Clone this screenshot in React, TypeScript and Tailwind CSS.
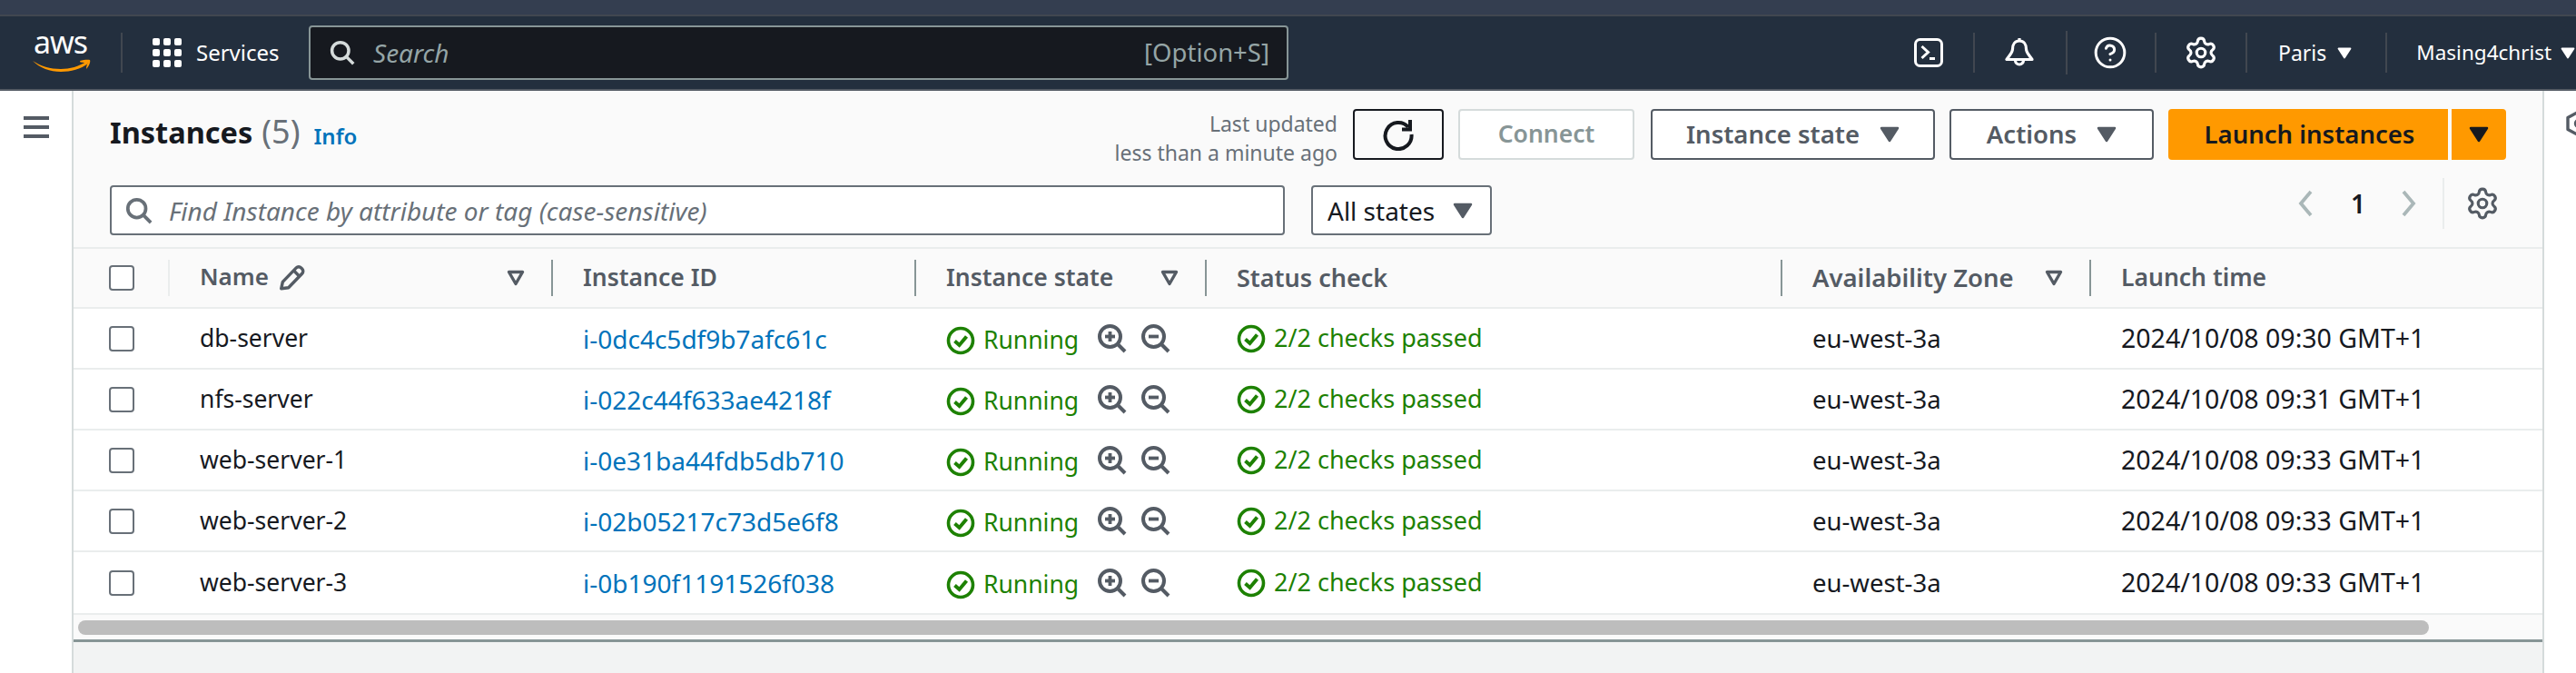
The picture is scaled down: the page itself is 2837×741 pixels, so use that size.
import { CircleHelp, Settings } from "lucide-react";

const instances = [
  { name: "db-server", id: "i-0dc4c5df9b7afc61c", time: "2024/10/08 09:30 GMT+1" },
  { name: "nfs-server", id: "i-022c44f633ae4218f", time: "2024/10/08 09:31 GMT+1" },
  { name: "web-server-1", id: "i-0e31ba44fdb5db710", time: "2024/10/08 09:33 GMT+1" },
  { name: "web-server-2", id: "i-02b05217c73d5e6f8", time: "2024/10/08 09:33 GMT+1" },
  { name: "web-server-3", id: "i-0b190f1191526f038", time: "2024/10/08 09:33 GMT+1" },
];

function Caret({ className }: { className: string }) {
  return (
    <svg viewBox="0 0 22 18" className={`shrink-0 ${className}`}>
      <path d="M2 2h18L11 16z" fill="currentColor" stroke="currentColor" strokeWidth="2.500" strokeLinejoin="round" />
    </svg>
  );
}

function FilterCaret() {
  return (
    <svg viewBox="0 0 20 18" className="w-[20px] h-[18px] text-[#545b64]">
      <path d="M2.500 2.500h15L10 15.500z" fill="none" stroke="currentColor" strokeWidth="3.400" strokeLinejoin="round" />
    </svg>
  );
}

function SearchIcon({ className }: { className: string }) {
  return (
    <svg viewBox="0 0 32 32" className={`shrink-0 ${className}`} fill="none" stroke="currentColor" strokeWidth="4">
      <circle cx="13.500" cy="13.500" r="10.500" />
      <path d="M21 21l9 9" />
    </svg>
  );
}

function CheckCircle() {
  return (
    <svg viewBox="0 0 32 32" className="w-[32px] h-[32px] shrink-0 text-[#1d8102]" fill="none" stroke="currentColor">
      <circle cx="16" cy="16" r="13.500" strokeWidth="3.600" />
      <path d="M9.500 16.500l5 4.500 8-9.500" strokeWidth="4" />
    </svg>
  );
}

function ZoomGlass({ plus }: { plus?: boolean }) {
  return (
    <svg viewBox="0 0 32 32" className="w-[32px] h-[32px] shrink-0 text-[#545b64]" fill="none" stroke="currentColor" strokeWidth="4">
      <circle cx="13.500" cy="13.500" r="11.500" />
      <path d="M21.500 21.500l8.500 8.500" />
      <path d="M8 13.500h11" strokeWidth="3.800" />
      {plus && <path d="M13.500 8v11" strokeWidth="3.800" />}
    </svg>
  );
}

function Checkbox() {
  return <div className="w-[28px] h-[28px] rounded-[4px] border-2 border-[#687078] bg-white" />;
}

function HeaderCell({ label, width, textSize, filter, edge }: { label: string; width: string; textSize: string; filter?: boolean; edge?: boolean }) {
  return (
    <div className={`${width} h-[40px] flex items-center justify-between pl-[33px] pr-[29px] whitespace-nowrap ${edge ? "border-r-2 border-[#879596]" : ""}`}>
      <span className={`${textSize} font-semibold text-[#545b64]`}>{label}</span>
      {filter && <FilterCaret />}
    </div>
  );
}

function OutlineButton({ label, width }: { label: string; width: string }) {
  return (
    <button className={`${width} h-[56px] flex items-center justify-center gap-[22px] rounded-[4px] border-2 border-[#545b64] bg-white text-[27.5px] font-semibold text-[#545b64]`}>
      {label}
      <Caret className="w-[22px] h-[18px] text-[#545b64]" />
    </button>
  );
}

function NavDivider({ className = "h-[44px]" }: { className?: string }) {
  return <div className={`w-[2px] shrink-0 bg-[#414750] ${className}`} />;
}

export default function App() {
  return (
    <div className="w-[2837px] h-[741px] overflow-hidden flex flex-col bg-white font-['Noto_Sans',sans-serif]">
      <div className="h-[18px] shrink-0 bg-[#343e50] border-b-2 border-[#414750]" />

      <nav className="h-[82px] shrink-0 flex items-center bg-[#232f3e] border-b-2 border-[#545b64] text-white">
        <div className="w-[133px] shrink-0 h-[52px] pl-[36px] flex flex-col">
          <span className="text-[34px] leading-[28px] tracking-[-1px] pl-[1px]">aws</span>
          <svg viewBox="0 0 64 16" className="w-[64px] h-[16px] mt-[4px] text-[#ff9900]">
            <path d="M0 3c9 6 19 9 31 9 10 0 20-3 28-8l2 2c-8 6-19 9-30 9C19 15 8 11 0 3z" fill="currentColor" />
            <path d="M52 3c4-1 8-1.500 11-1 1 2-1 7-4 10 0-3 1-5 1.500-7-2 0-5 0-8-.5z" fill="currentColor" />
          </svg>
        </div>
        <NavDivider />
        <div className="ml-[33px] shrink-0 grid grid-cols-3 gap-[4px] w-[32px]">
          {Array.from({ length: 9 }).map((_, i) => (
            <span key={i} className="w-[8px] h-[8px] rounded-[2px] bg-white" />
          ))}
        </div>
        <span className="ml-[16px] shrink-0 text-[24px] w-[124px]">Services</span>
        <div className="w-[1079px] shrink-0 h-[60px] flex items-center rounded-[4px] border-2 border-[#879596] bg-[#16191f] pl-[21px] pr-[19px] text-[#95a5a6]">
          <SearchIcon className="w-[28px] h-[28px] text-[#d5dbdb]" />
          <span className="ml-[20px] text-[28px] italic">Search</span>
          <span className="ml-auto text-[27.5px]">[Option+S]</span>
        </div>
        <div className="ml-[689px] shrink-0 flex items-center">
          <svg viewBox="0 0 32 32" className="w-[32px] h-[32px]" fill="none" stroke="currentColor" strokeWidth="3">
            <rect x="1.500" y="1.500" width="29" height="29" rx="5" />
            <path d="M8.500 9l7 6.500-7 6.500M17 22.500h6" />
          </svg>
          <div className="ml-[33px]"><NavDivider /></div>
          <svg viewBox="0 0 32 32" className="ml-[33px] w-[32px] h-[32px]" fill="none" stroke="currentColor" strokeWidth="3.200" strokeLinejoin="round">
            <path d="M16 0v3" />
            <path d="M16 3C11 3 8.500 7 8.500 12C8.500 16 5 19 2 23.500H30C27 19 23.500 16 23.500 12C23.500 7 21 3 16 3Z" />
            <path d="M11.500 24.500a4.500 4.500 0 0 0 9 0" />
          </svg>
          <div className="ml-[35px]"><NavDivider className="h-[48px]" /></div>
          <CircleHelp size={38} strokeWidth={1.9} className="ml-[28px]" />
          <div className="ml-[30px]"><NavDivider /></div>
          <Settings size={38} strokeWidth={2} className="ml-[30px]" />
          <div className="ml-[30px]"><NavDivider /></div>
          <span className="ml-[34px] text-[23px]">Paris</span>
          <Caret className="ml-[12px] w-[16px] h-[13px]" />
          <div className="ml-[37px]"><NavDivider /></div>
          <span className="ml-[32px] text-[22.5px] whitespace-nowrap">Masing4christ</span>
          <Caret className="ml-[10px] w-[16px] h-[13px]" />
        </div>
      </nav>

      <div className="flex-1 flex min-h-0">
        <aside className="w-[81px] shrink-0 border-r-2 border-[#d5dbdb] pt-[28px] pl-[26px]">
          <div className="w-[28px] flex flex-col gap-[6px]">
            <span className="h-[4px] bg-[#545b64]" />
            <span className="h-[4px] bg-[#545b64]" />
            <span className="h-[4px] bg-[#545b64]" />
          </div>
        </aside>

        <main className="w-[2719px] shrink-0 flex flex-col bg-[#fafafa]">
          <div className="h-[76px] flex items-start pt-[20px] pl-[40px] pr-[40px]">
            <h1 className="-mt-[3px] flex items-baseline gap-[10px] text-[#16191f] leading-[56px]">
              <span className="text-[32.5px] font-bold">Instances</span>
              <span className="text-[36px] text-[#687078]">(5)</span>
            </h1>
            <span className="ml-[15px] mt-[4px] text-[24px] font-semibold text-[#0073bb] leading-[52px]">Info</span>
            <div className="ml-auto flex items-start">
              <div className="text-right text-[23px] leading-[32px] text-[#687078]">
                <div>Last updated</div>
                <div>less than a minute ago</div>
              </div>
              <button className="ml-[17px] w-[100px] h-[56px] flex items-center justify-center rounded-[4px] border-2 border-[#16191f] bg-[#fafafa]">
                <svg viewBox="0 0 36 36" className="w-[36px] h-[36px] text-[#16191f]" fill="none" stroke="currentColor" strokeWidth="4">
                  <path d="M29 10A14.500 14.500 0 1 0 32.500 18" />
                  <path d="M31 2v10.500H22" />
                </svg>
              </button>
              <button className="ml-[16px] w-[194px] h-[56px] rounded-[4px] border-2 border-[#d5dbdb] bg-white text-[26.5px] font-semibold text-[#879596]">
                Connect
              </button>
              <div className="ml-[18px]"><OutlineButton label="Instance state" width="w-[313px]" /></div>
              <div className="ml-[16px]"><OutlineButton label="Actions" width="w-[225px]" /></div>
              <div className="ml-[16px] flex gap-[4px]">
                <button className="w-[308px] h-[56px] pl-[3px] rounded-l-[4px] bg-[#ff9900] text-[27.5px] font-semibold text-[#16191f]">
                  Launch instances
                </button>
                <button className="w-[60px] h-[56px] rounded-r-[4px] bg-[#ff9900] flex items-center justify-center">
                  <Caret className="w-[22px] h-[18px] text-[#16191f]" />
                </button>
              </div>
            </div>
          </div>

          <div className="h-[96px] pt-[28px] pl-[40px] pr-[47px] flex items-start">
            <div className="w-[1294px] h-[55px] flex items-center rounded-[4px] border-2 border-[#687078] bg-white pl-[15px]">
              <SearchIcon className="w-[30px] h-[30px] text-[#687078]" />
              <span className="ml-[18px] text-[28px] italic text-[#687078]">Find Instance by attribute or tag (case-sensitive)</span>
            </div>
            <div className="ml-[29px] w-[199px] h-[55px] flex items-center justify-between rounded-[4px] border-2 border-[#687078] bg-white pl-[16px] pr-[19px] text-[28px] text-[#16191f]">
              All states
              <Caret className="w-[22px] h-[18px] text-[#545b64]" />
            </div>
            <div className="ml-auto flex items-center -mt-[8px]">
              <svg viewBox="0 0 18 30" className="w-[18px] h-[30px] text-[#aab7b8]" fill="none" stroke="currentColor" strokeWidth="3.800">
                <path d="M15 2L4 15l11 13" />
              </svg>
              <span className="ml-[41px] w-[18px] text-[28px] font-semibold text-[#16191f]">1</span>
              <svg viewBox="0 0 18 30" className="ml-[37px] w-[18px] h-[30px] text-[#aab7b8]" fill="none" stroke="currentColor" strokeWidth="3.800">
                <path d="M3 2l11 13L3 28" />
              </svg>
              <div className="ml-[28px] w-[2px] h-[56px] bg-[#eaeded]" />
              <Settings size={38} strokeWidth={2} className="ml-[23px] text-[#545b64]" />
            </div>
          </div>

          <div className="border-t-2 border-[#eaeded]">
            <div className="h-[66px] flex items-center border-b-2 border-[#eaeded] bg-[#fafafa]">
              <div className="w-[106px] h-[40px] flex items-center pl-[39px] border-r-2 border-[#eaeded]">
                <Checkbox />
              </div>
              <div className="w-[422px] h-[40px] flex items-center justify-between pl-[33px] pr-[29px] border-r-2 border-[#879596]">
                <span className="-mt-[3px] flex items-center gap-[10px] text-[26px] font-semibold text-[#545b64]">
                  Name
                  <svg viewBox="0 0 30 30" className="w-[32px] h-[32px]" fill="none" stroke="currentColor" strokeWidth="3.200" strokeLinejoin="round">
                    <path d="M3.500 27l1.500-7L19 5.500a3.500 3.500 0 0 1 5 0l1 1a3.500 3.500 0 0 1 0 5L11 26z" />
                    <path d="M16.500 8.500l6 6" />
                  </svg>
                </span>
                <FilterCaret />
              </div>
              <HeaderCell label="Instance ID" width="w-[400px]" textSize="text-[26.5px]" edge />
              <HeaderCell label="Instance state" width="w-[320px]" textSize="text-[26.5px]" filter edge />
              <HeaderCell label="Status check" width="w-[634px]" textSize="text-[27px]" edge />
              <HeaderCell label="Availability Zone" width="w-[340px]" textSize="text-[27.5px]" filter edge />
              <HeaderCell label="Launch time" width="w-[496px]" textSize="text-[26.5px]" />
            </div>

            <div>
              {instances.map((row) => (
                <div key={row.id} className="h-[67px] last:h-[69px] flex items-center whitespace-nowrap border-b-2 border-[#eaeded] bg-white text-[#16191f]">
                  <div className="w-[106px] pl-[39px]"><Checkbox /></div>
                  <div className="w-[422px] pl-[33px] text-[26.5px]">{row.name}</div>
                  <div className="w-[400px] pl-[33px] text-[28px] text-[#0073bb]">{row.id}</div>
                  <div className="w-[320px] pl-[33px] flex items-center text-[26.5px] text-[#1d8102]">
                    <div className="flex items-center gap-[9px] mt-[5px]">
                      <CheckCircle />
                      Running
                    </div>
                    <div className="ml-[21px] flex gap-[16px]">
                      <ZoomGlass plus />
                      <ZoomGlass />
                    </div>
                  </div>
                  <div className="w-[634px] pl-[33px] flex items-center gap-[9px] text-[27px] text-[#1d8102]">
                    <CheckCircle />
                    2/2 checks passed
                  </div>
                  <div className="w-[340px] pl-[33px] text-[27.5px]">eu-west-3a</div>
                  <div className="w-[496px] pl-[33px] text-[28.5px]">{row.time}</div>
                </div>
              ))}
            </div>

            <div className="h-[30px] bg-[#fafafa] px-[5px] pt-[6px] border-b-[3px] border-[#879596]">
              <div className="w-[2589px] h-[16px] rounded-[8px] bg-[#bdbdbd]" />
            </div>
          </div>

          <div className="flex-1 bg-[#f2f3f3]" />
        </main>

        <aside className="flex-1 overflow-hidden border-l-2 border-[#d5dbdb] pt-[21px] pl-[24px]">
          <svg viewBox="0 0 28 30" className="w-[28px] h-[30px] shrink-0 text-[#545b64]" fill="none" stroke="currentColor" strokeWidth="3.400" strokeLinejoin="round">
            <path d="M14 2l12 6.500v13L14 28 2 21.500v-13z" />
            <circle cx="14" cy="15" r="3.500" />
          </svg>
        </aside>
      </div>
    </div>
  );
}
